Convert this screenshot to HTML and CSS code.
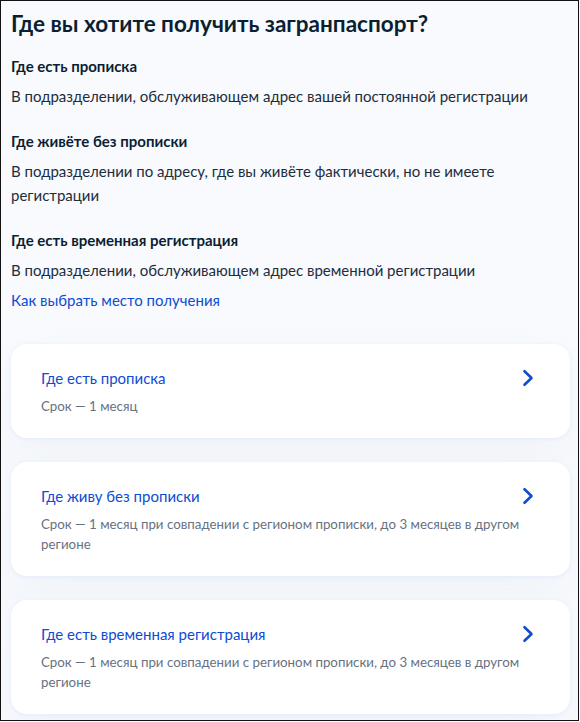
FILE: index.html
```html
<!DOCTYPE html>
<html lang="ru">
<head>
<meta charset="utf-8">
<title>Загранпаспорт — место получения</title>
<link rel="stylesheet" href="styles.css">
</head>
<body>
<div class="frame">
  <main class="page">
    <h1 class="title">Где вы хотите получить загранпаспорт?</h1>

    <section class="info">
      <h2 class="info-head">Где есть прописка</h2>
      <p class="info-text">В подразделении, обслуживающем адрес вашей постоянной регистрации</p>
    </section>

    <section class="info">
      <h2 class="info-head">Где живёте без прописки</h2>
      <p class="info-text">В подразделении по адресу, где вы живёте фактически, но не имеете регистрации</p>
    </section>

    <section class="info info-last">
      <h2 class="info-head">Где есть временная регистрация</h2>
      <p class="info-text">В подразделении, обслуживающем адрес временной регистрации</p>
    </section>

    <a class="help-link" href="#">Как выбрать место получения</a>

    <div class="options">
      <a class="option" href="#">
        <div class="option-title">Где есть прописка</div>
        <svg class="chevron" viewBox="0 0 24 24" width="24" height="24" aria-hidden="true">
          <path d="M8.5 5.2 L15.5 12 L8.5 18.8" fill="none" stroke="currentColor" stroke-width="2.6" stroke-linecap="round" stroke-linejoin="round"/>
        </svg>
        <div class="option-note">Срок — 1 месяц</div>
      </a>

      <a class="option" href="#">
        <div class="option-title">Где живу без прописки</div>
        <svg class="chevron" viewBox="0 0 24 24" width="24" height="24" aria-hidden="true">
          <path d="M8.5 5.2 L15.5 12 L8.5 18.8" fill="none" stroke="currentColor" stroke-width="2.6" stroke-linecap="round" stroke-linejoin="round"/>
        </svg>
        <div class="option-note">Срок — 1 месяц при совпадении с регионом прописки, до 3 месяцев в другом регионе</div>
      </a>

      <a class="option" href="#">
        <div class="option-title">Где есть временная регистрация</div>
        <svg class="chevron" viewBox="0 0 24 24" width="24" height="24" aria-hidden="true">
          <path d="M8.5 5.2 L15.5 12 L8.5 18.8" fill="none" stroke="currentColor" stroke-width="2.6" stroke-linecap="round" stroke-linejoin="round"/>
        </svg>
        <div class="option-note">Срок — 1 месяц при совпадении с регионом прописки, до 3 месяцев в другом регионе</div>
      </a>
    </div>
  </main>
</div>
</body>
</html>
```

FILE: styles.css
```css
* {
  box-sizing: border-box;
}

html, body {
  margin: 0;
  padding: 0;
  background: #ffffff;
}

body {
  font-family: Lato, "Noto Sans", "Liberation Sans", sans-serif;
  color: #0b1f33;
}

.frame {
  width: 579px;
  height: 721px;
  border: 1px solid #111111;
  background: #f8fafd;
  overflow: hidden;
}

.page {
  padding: 8px 8px 0 10px;
}

.title {
  margin: 0 0 15px;
  font-size: 22.5px;
  line-height: 30px;
  font-weight: 700;
  color: #0b1f33;
}

.info {
  margin-bottom: 21px;
}

.info-last {
  margin-bottom: 6px;
}

.info-head {
  margin: 0 0 6px;
  font-size: 15px;
  line-height: 24px;
  font-weight: 700;
}

.info-text {
  margin: 0;
  font-size: 15px;
  line-height: 24px;
  font-weight: 400;
  color: #1d2d3d;
}

.help-link {
  display: block;
  font-size: 15px;
  line-height: 24px;
  color: #0d4cd3;
  text-decoration: none;
}

.options {
  display: flex;
  flex-direction: column;
  gap: 24px;
  margin-top: 32px;
}

/* title + chevron on the first row, the note spans the full card width */
.option {
  display: grid;
  grid-template-columns: 1fr 24px;
  column-gap: 12px;
  row-gap: 6px;
  align-items: center;
  padding: 22px 30px;
  background: #ffffff;
  border-radius: 16px;
  box-shadow: 0 1px 4px #e3ebfc, 0 24px 48px rgba(230, 235, 245, 0.4);
  text-decoration: none;
}

.option-title {
  font-size: 15px;
  line-height: 24px;
  color: #0d4cd3;
}

.option-note {
  grid-column: 1 / -1;
  font-size: 13.3px;
  line-height: 20px;
  color: #66727f;
}

.chevron {
  color: #0d4cd3;
}
```
